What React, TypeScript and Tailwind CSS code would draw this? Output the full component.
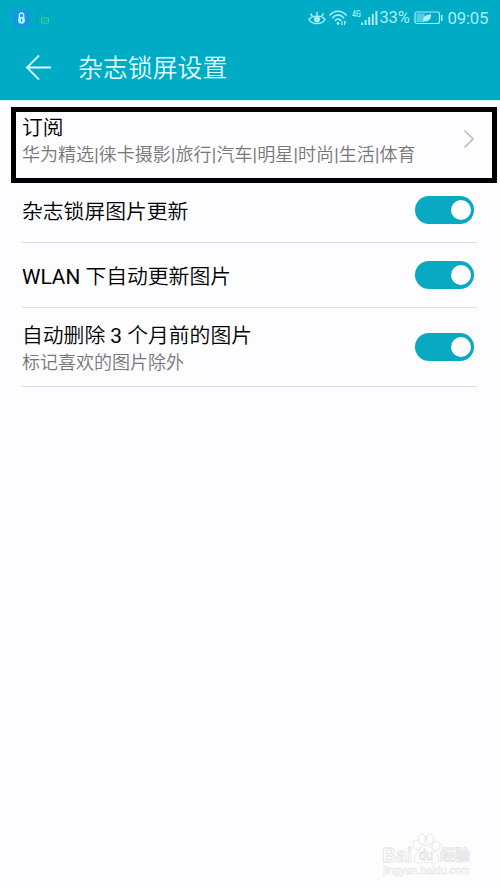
import React from "react";

const FONT = "font-['Roboto','Noto_Sans_CJK_SC',sans-serif]";

const CHANNELS = ["华为精选", "徕卡摄影", "旅行", "汽车", "明星", "时尚", "生活", "体育"];

function StatusBar() {
  return (
    <div className="flex h-[36px] items-center pl-[13px] pr-[10.500px] text-[#a9eef8]">
      <svg className="h-[17px] w-[17px]" viewBox="0 0 17 17">
        <rect width="17" height="17" rx="1" fill="#1694dd" />
        <path d="M6.3 8V5.2a2.2 2.2 0 0 1 4.4 0V8" fill="none" stroke="#b6f3fb" strokeWidth="1.4" />
        <circle cx="8.5" cy="10.2" r="3.5" fill="#b6f3fb" />
        <path d="M8.5 8.7v3" stroke="#1694dd" strokeWidth="1.2" />
      </svg>
      <svg className="ml-[5px] h-[18px] w-[16px]" viewBox="0 0 16 18" fill="none">
        <path d="M1 14C2 12 2 10 2 6C2 2.500 4 1 6.500 1S11 2.500 11 6v3" stroke="#0799bd" strokeWidth="1" />
        <path d="M6.500 9h7v5h-2.500l-1 1.500-1-1.500h-2.500z" stroke="#45cc91" strokeWidth="1" />
        <path d="M8 11.500h4.500" stroke="#45cc91" strokeDasharray="1 .7" />
      </svg>
      <svg className="ml-auto h-[18px] w-[18px]" viewBox="0 0 18 18" fill="none" stroke="currentColor" strokeWidth="1.4">
        <path d="M1 10.500C4 6 14 6 17 10.500C14 16 4 16 1 10.500Z" />
        <circle cx="9" cy="10.300" r="2.400" fill="currentColor" />
        <path d="M9 6.500V3M4.500 7.500L2.500 4.500M13.500 7.500l2-3" />
      </svg>
      <svg className="ml-[3px] h-[18px] w-[19px]" viewBox="0 0 19 18" fill="none" stroke="currentColor" strokeWidth="1.5">
        <path d="M.7 6.500C5 .8 13 .8 17.500 6.500M3.300 9.200C6.500 5 11.700 5 15 9.200M6 12C7.800 9.400 10.300 9.400 12.200 12" />
        <circle cx="9" cy="14.400" r="1.300" fill="currentColor" stroke="none" />
        <path d="M13 12v4l-1.200-1.400M15.500 16v-4l1.800 2.400" strokeWidth="1" />
      </svg>
      <svg className="mb-[9px] ml-[4px] h-[14px] w-[10px] overflow-visible" viewBox="0 0 10 14" fill="currentColor">
        <text x="0" y="10" fontSize="9.500" fontWeight="500" textLength="9" lengthAdjust="spacingAndGlyphs">4G</text>
      </svg>
      <svg className="-ml-px h-[16px] w-[17px]" viewBox="0 0 17 16" fill="currentColor">
        <path d="M0 12.500h2V15H0zM3.600 10h2v5h-2zM7.200 7h2v8h-2zM10.800 4h2v11h-2zM14.400 1h2v14h-2z" />
      </svg>
      <span className="ml-[2px] w-[31px] whitespace-nowrap text-[16.500px] leading-[20px] tracking-[-0.2px]">33%</span>
      <svg className="ml-[3px] h-[14px] w-[30px]" viewBox="0 0 30 14" fill="none">
        <rect x="1" y="1" width="24.500" height="11.500" rx="2" stroke="currentColor" strokeWidth="1.200" />
        <path d="M2.500 2.500h8v8.500h-8z" fill="#55cce0" />
        <path d="M8.500 11.500L9.300 9.300C8.800 5.500 12 3.300 17.200 3.200C17 8 14.500 11 10.300 10.200Z" fill="currentColor" />
        <path d="M27.800 4v6" stroke="currentColor" strokeWidth="1.500" />
      </svg>
      <span className="ml-[4px] w-[42px] whitespace-nowrap text-[16.800px] leading-[20px] tracking-[-0.2px]">09:05</span>
    </div>
  );
}

function Toggle() {
  return (
    <button role="switch" aria-checked="true" className="flex h-[28px] w-[59px] shrink-0 items-center justify-end rounded-full bg-[#08a9c3] pr-[3px]">
      <span className="h-[20px] w-[20px] rounded-full bg-white" />
    </button>
  );
}

function Row({ title, note, className }: { title: React.ReactNode; note?: string; className: string }) {
  return (
    <div className={`ml-[22px] mr-[23px] flex items-center justify-between border-b border-[#dedee1] pr-[3px] ${className}`}>
      <div className="whitespace-nowrap pt-[3px]">
        <div className="text-[20.8px] font-[350] leading-[28px] text-black">{title}</div>
        {note && <div className="text-[18px] font-[350] leading-[26px] text-[#777]">{note}</div>}
      </div>
      <Toggle />
    </div>
  );
}

function Watermark() {
  return (
    <div className="absolute left-[382px] top-[832px] h-[46px] w-[92px]">
      <svg className="h-full w-full" viewBox="0 0 92 46" fill="#fefdff" stroke="#e2e1e5" strokeWidth=".8">
        <ellipse cx="35" cy="13" rx="4" ry="5" transform="rotate(-20 35 13)" />
        <ellipse cx="40" cy="7" rx="3.500" ry="5" />
        <ellipse cx="48" cy="7" rx="3.500" ry="5" />
        <ellipse cx="54" cy="14" rx="4" ry="5" transform="rotate(20 54 14)" />
        <path d="M44 13C39 13 38 19 34 22C30 27 33 32 38 31C43 30 46 30 51 31C57 32 59 26 54 21C50 18 49 13 44 13Z" />
        <text x="0" y="29.500" fontSize="21" fontWeight="700" textLength="30" lengthAdjust="spacingAndGlyphs" className="font-['Liberation_Sans',sans-serif]">Bai</text>
        <text x="37" y="28" fontSize="14" textLength="14" lengthAdjust="spacingAndGlyphs" className="font-['Liberation_Sans',sans-serif]">du</text>
        <text x="58" y="27.500" fontSize="15" fontWeight="700" textLength="30" className="font-['Noto_Sans_CJK_SC',sans-serif]">经验</text>
        <text x="1" y="42" fontSize="10" strokeWidth=".4" textLength="87" lengthAdjust="spacingAndGlyphs" className="font-['Liberation_Sans',sans-serif]">jingyan.baidu.com</text>
      </svg>
    </div>
  );
}

export default function App() {
  return (
    <div className={`relative h-[888px] w-[500px] overflow-hidden bg-[#fdfcff] ${FONT}`}>
      <header className="h-[100px] bg-[#00abc6]">
        <StatusBar />
        <div className="flex h-[62px] items-center pl-[25px]">
          <svg className="h-[27px] w-[27px]" viewBox="0 0 27 27" fill="none" stroke="#d9fcff" strokeWidth="1.800">
            <path d="M26 13.500H2M14 1.500L2 13.500l12 12" />
          </svg>
          <h1 className="ml-[26px] mt-[4px] whitespace-nowrap text-[24.900px] font-[350] leading-[36px] text-[#e0fdff]">杂志锁屏设置</h1>
        </div>
      </header>
      <main className="border-t border-[#d0fbff]">
        <section className="ml-[11px] mt-[6px] flex h-[76px] w-[486px] justify-between border-[5px] border-black pl-[6px] pr-[17px] pt-[2px]">
          <div className="whitespace-nowrap">
            <div className="text-[20.800px] font-[350] leading-[28px] text-black">订阅</div>
            <div className="flex text-[18px] font-[350] leading-[26px] text-[#777]">
              {CHANNELS.map((name, i) => (
                <React.Fragment key={name}>
                  {i > 0 && <span className="w-[4.800px] text-center font-normal">|</span>}
                  <span>{name}</span>
                </React.Fragment>
              ))}
            </div>
          </div>
          <svg className="mt-[15px] h-[20px] w-[12px]" viewBox="0 0 12 20" fill="none" stroke="#bdbdbf" strokeWidth="1.700">
            <path d="M1.500 1.500L10 10l-8.500 8.500" />
          </svg>
        </section>
        <Row title="杂志锁屏图片更新" className="h-[60px] pb-[5px]" />
        <Row title={<><span className="font-normal">WLAN </span>下自动更新图片</>} className="h-[65px]" />
        <Row title={<>自动删除<span className="font-normal"> 3 </span>个月前的图片</>} note="标记喜欢的图片除外" className="h-[79px]" />
      </main>
      <Watermark />
    </div>
  );
}
